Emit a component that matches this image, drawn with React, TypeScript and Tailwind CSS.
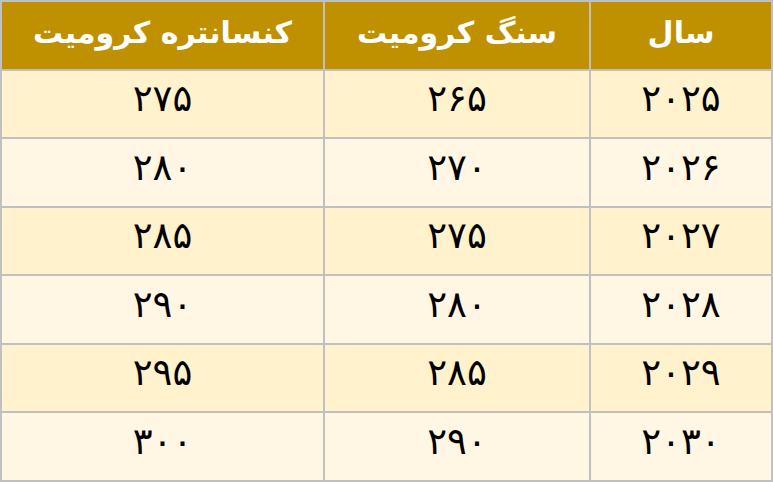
import React from "react";

const rows = [
  ["۲۰۲۵", "۲۶۵", "۲۷۵"],
  ["۲۰۲۶", "۲۷۰", "۲۸۰"],
  ["۲۰۲۷", "۲۷۵", "۲۸۵"],
  ["۲۰۲۸", "۲۸۰", "۲۹۰"],
  ["۲۰۲۹", "۲۸۵", "۲۹۵"],
  ["۲۰۳۰", "۲۹۰", "۳۰۰"],
];

const headers = ["سال", "سنگ کرومیت", "کنسانتره کرومیت"];

const App = () => {
  return (
    <div
      dir="rtl"
      className="w-[773px] h-[482px] p-[2px] bg-[#c0c0c0] grid grid-cols-[180px_264px_321px] grid-rows-[repeat(7,minmax(0,1fr))] gap-[2px] font-['DejaVu_Sans',sans-serif]"
    >
      {headers.map((h) => (
        <div
          key={h}
          className="bg-[#bf9000] text-white font-bold text-[30px] flex items-center justify-center pb-[6px]"
        >
          {h}
        </div>
      ))}
      {rows.map((row, i) =>
        row.map((cell, j) => (
          <div
            key={`${i}-${j}`}
            className={`${
              i % 2 === 0 ? "bg-[#fff2cc]" : "bg-[#fff7e3]"
            } text-black text-[37px] flex items-center justify-center pb-[10px]`}
          >
            {cell}
          </div>
        ))
      )}
    </div>
  );
};

export default App;
